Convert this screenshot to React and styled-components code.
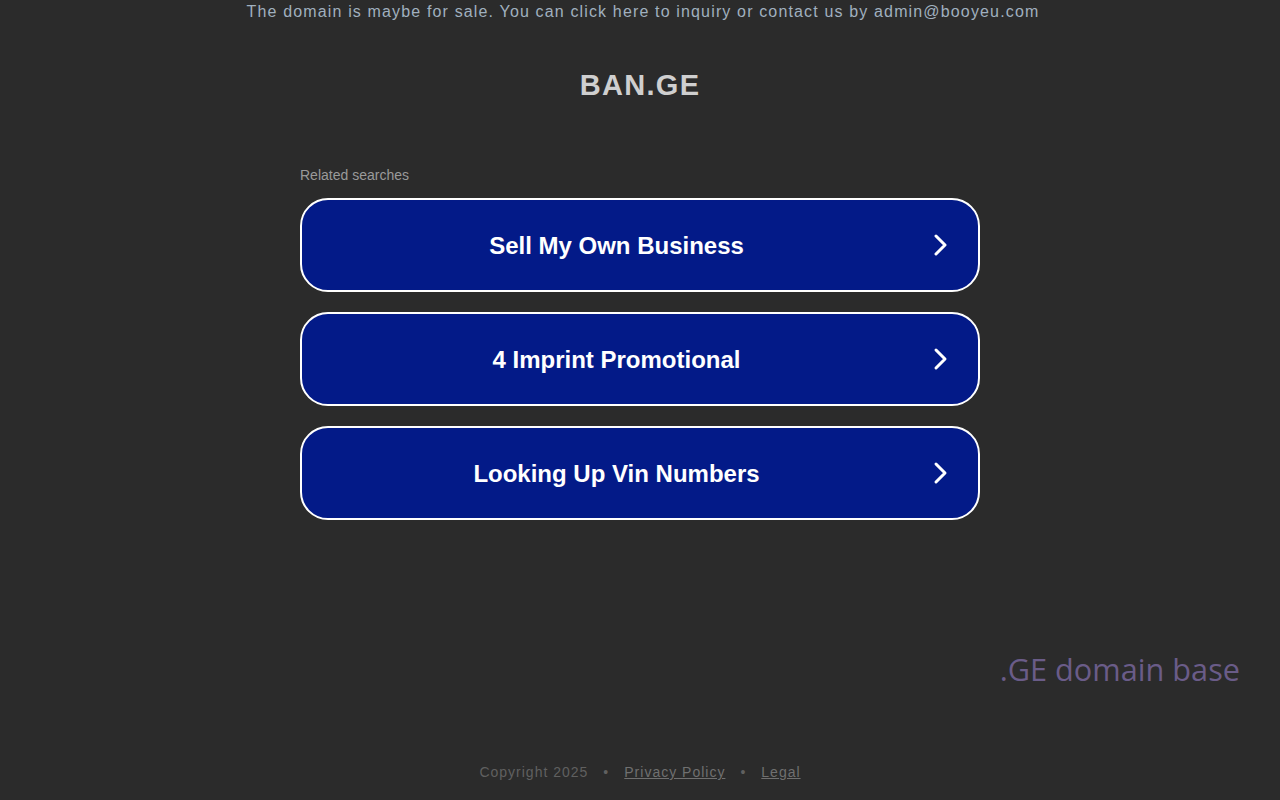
import React from "react";
import styled, { createGlobalStyle } from "styled-components";

const Global = createGlobalStyle`
  html, body {
    margin: 0;
    padding: 0;
    background: #2b2b2b;
    font-family: "Liberation Sans", Arial, sans-serif;
  }
`;

const searches = ["Sell My Own Business", "4 Imprint Promotional", "Looking Up Vin Numbers"];

const Chevron = () => (
  <svg width="20" height="24" viewBox="0 0 20 24" fill="none">
    <path d="M5 3 L14 12 L5 21" stroke="#fff" strokeWidth="3" strokeLinecap="round" strokeLinejoin="round" />
  </svg>
);

const App = () => {
  return (
    <>
      <Global />
      <Page>
        <TopNotice>
          The domain is maybe for sale. You can click here to inquiry or contact us by admin@booyeu.com
        </TopNotice>
        <Title>BAN.GE</Title>
        <Related>
          <RelatedLabel>Related searches</RelatedLabel>
          {searches.map((s) => (
            <SearchButton key={s}>
              <span>{s}</span>
              <ChevronBox>
                <Chevron />
              </ChevronBox>
            </SearchButton>
          ))}
        </Related>
        <Brand>.GE domain base</Brand>
        <Footer>
          <span>Copyright 2025</span>
          <Dot>•</Dot>
          <FooterLink href="#">Privacy Policy</FooterLink>
          <Dot>•</Dot>
          <FooterLink href="#">Legal</FooterLink>
        </Footer>
      </Page>
    </>
  );
};

export default App;

const Page = styled.div`
  width: 1280px;
  height: 800px;
  display: flex;
  flex-direction: column;
  align-items: center;
`;

const TopNotice = styled.div`
  margin-top: 3px;
  padding-left: 6px;
  font-size: 16px;
  line-height: 18px;
  letter-spacing: 1.15px;
  color: #a0b0bf;
`;

const Title = styled.h1`
  margin: 47px 0 0;
  font-size: 29px;
  line-height: 34px;
  font-weight: bold;
  letter-spacing: 1.3px;
  color: #cfcfcf;
`;

const Related = styled.div`
  margin-top: 65px;
  width: 680px;
  display: flex;
  flex-direction: column;
  gap: 20px;
`;

const RelatedLabel = styled.div`
  font-size: 14px;
  line-height: 16px;
  color: #9a9a9a;
  margin-bottom: -5px;
`;

const SearchButton = styled.div`
  box-sizing: border-box;
  height: 94px;
  border: 2px solid #fff;
  border-radius: 28px;
  background: #031a88;
  display: flex;
  align-items: center;
  padding: 0 25px 0 0;

  > span {
    flex: 1;
    text-align: center;
    font-size: 24px;
    font-weight: bold;
    color: #fff;
    padding: 2px 0 0 2px;
  }
`;

const ChevronBox = styled.div`
  width: 24px;
  display: flex;
  align-items: center;
  justify-content: center;
`;

const Brand = styled.div`
  align-self: flex-end;
  margin: 129px 40px 0 0;
  font-family: "Open Sans", sans-serif;
  font-size: 30.7px;
  line-height: 40px;
  color: #6a5c88;
`;

const Footer = styled.div`
  margin-top: 75px;
  display: flex;
  gap: 13px;
  font-size: 14px;
  line-height: 16px;
  letter-spacing: 1px;
  color: #606060;
`;

const Dot = styled.span`
  margin: 0 2px;
`;

const FooterLink = styled.a`
  color: #707070;
  text-decoration: underline;
`;
